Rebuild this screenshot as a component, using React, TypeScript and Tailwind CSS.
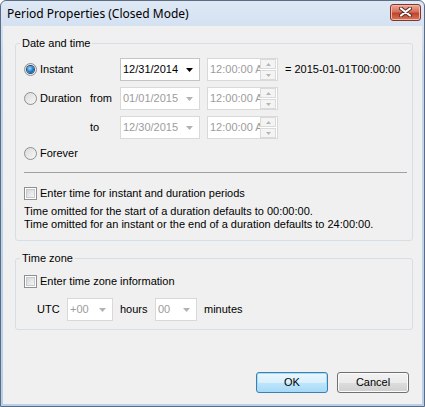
import React from "react";

const body = "font-['Liberation_Sans',Tahoma,sans-serif] text-[11px] leading-[13px]";

function Radio({ checked }: { checked?: boolean }) {
    return (
        <span className="flex h-[13px] w-[13px] shrink-0 items-center justify-center rounded-full border border-[#8e8f8f] bg-[linear-gradient(135deg,#d9dadb,#f8f8f8)]">
            {checked && (
                <span className="h-[7px] w-[7px] rounded-full bg-[radial-gradient(circle_at_40%_35%,#a4dcff,#2f86cc_45%,#0d3e72)] shadow-[0_0_0_1px_#1b4d7c]" />
            )}
        </span>
    );
}

function Checkbox() {
    return (
        <span className="flex h-[13px] w-[13px] shrink-0 items-center justify-center border border-[#8e8f8f] bg-white">
            <span className="h-[9px] w-[9px] border border-[#c6c9ce] bg-[linear-gradient(135deg,#d4d7db,#f4f4f4)]" />
        </span>
    );
}

function Arrow({ color }: { color: string }) {
    return (
        <svg width="7" height="4" viewBox="0 0 7 4" className="shrink-0">
            <path d="M0 0h7L3.5 4z" fill={color} />
        </svg>
    );
}

function Combo({ value, disabled, width }: { value: string; disabled?: boolean; width: string }) {
    return (
        <div
            className={`flex h-[23px] ${width} shrink-0 items-center justify-between border bg-white pl-[2px] pr-[6px] ${
                disabled ? "border-[#d9d9d9] text-[#9c9c9c]" : "border-[#c4c4c4] text-black"
            }`}
        >
            <span>{value}</span>
            <Arrow color={disabled ? "#b3b3b3" : "#000000"} />
        </div>
    );
}

// the time box is narrower than its text, as in the dialog: "12:00:00 A" shows, the rest is cut
function Spinner() {
    return (
        <div className="flex h-[23px] w-[71px] shrink-0 items-center border border-[#d9d9d9] bg-white pl-[2px] pr-[1px]">
            <span className="w-[51px] overflow-hidden whitespace-nowrap text-[#9c9c9c]">12:00:00 AM</span>
            <div className="ml-auto flex h-[21px] w-[16px] flex-col gap-px">
                {[0, 1].map((i) => (
                    <div key={i} className="flex flex-1 items-center justify-center border border-[#dadada] bg-[#f4f4f4]">
                        <svg width="5" height="3" viewBox="0 0 5 3">
                            <path d={i === 0 ? "M0 3h5L2.5 0z" : "M0 0h5L2.5 3z"} fill="#b5b5b5" />
                        </svg>
                    </div>
                ))}
            </div>
        </div>
    );
}

function Button({ label, primary }: { label: string; primary?: boolean }) {
    return (
        <button
            type="button"
            className={`h-[21px] w-[72px] rounded-[3px] border text-black ${
                primary
                    ? "border-[#3c7fb1] bg-[linear-gradient(#eaf6fd_0%,#d9f0fc_50%,#bee6fd_51%,#a7d9f5_100%)] shadow-[inset_0_0_0_1px_#a6dcf7]"
                    : "border-[#707070] bg-[linear-gradient(#f2f2f2_0%,#ebebeb_50%,#dddddd_51%,#cfcfcf_100%)] shadow-[inset_0_0_0_1px_#fbfbfb]"
            }`}
        >
            {label}
        </button>
    );
}

export default function App() {
    return (
        <div className={`flex h-[407px] w-[425px] flex-col rounded-t-[6px] border border-[#5b6d82] bg-[linear-gradient(#dfe9f5,#c4d6ec_60px,#b9cfe8)] ${body}`}>
            {/* title bar */}
            <div className="flex h-[25px] shrink-0 items-center justify-between pl-[6px] pr-[3px]">
                <span className="font-['Noto_Sans',sans-serif] text-[12px] leading-none text-black">
                    Period Properties (Closed Mode)
                </span>
                <div className="mt-[-3px] flex h-[17px] w-[31px] items-center justify-center rounded-[3px] border border-[#8a3226] bg-[linear-gradient(#e9a99b,#d6705c_45%,#c0432b_55%,#d5785c)] shadow-[inset_0_0_0_1px_#f0b8a8]">
                    <svg width="13" height="10" viewBox="0 0 13 10">
                        <path d="M2 1.5l9 7M11 1.5l-9 7" stroke="#5a2a22" strokeWidth="4" strokeLinecap="round" />
                        <path d="M2 1.5l9 7M11 1.5l-9 7" stroke="#ffffff" strokeWidth="2.2" strokeLinecap="round" />
                    </svg>
                </div>
            </div>

            {/* client area */}
            <div className="mx-[2px] mb-[2px] flex flex-1 flex-col bg-[#f0f0f0] pl-[12px] pr-[9px] pt-[10px]">
                <fieldset className="rounded-[3px] border border-[#d5dfe5] pb-[9px] pl-[4px] pr-[4px] pt-[8px]">
                    <legend className="px-[2px] leading-[14px] text-black">Date and time</legend>

                    <div className="flex flex-col pl-[4px]">
                        <div className="flex h-[23px] items-center">
                            <div className="flex w-[96px] items-center gap-[3px]">
                                <Radio checked />
                                <span>Instant</span>
                            </div>
                            <Combo value="12/31/2014" width="w-[80px]" />
                            <div className="ml-[7px]">
                                <Spinner />
                            </div>
                            <span className="ml-[7px]">= 2015-01-01T00:00:00</span>
                        </div>

                        <div className="mt-[6px] flex h-[23px] items-center">
                            <div className="flex w-[66px] items-center gap-[3px]">
                                <Radio />
                                <span>Duration</span>
                            </div>
                            <span className="w-[30px]">from</span>
                            <Combo value="01/01/2015" disabled width="w-[80px]" />
                            <div className="ml-[7px]">
                                <Spinner />
                            </div>
                        </div>

                        <div className="mt-[6px] flex h-[23px] items-center">
                            <span className="ml-[66px] w-[30px]">to</span>
                            <Combo value="12/30/2015" disabled width="w-[80px]" />
                            <div className="ml-[7px]">
                                <Spinner />
                            </div>
                        </div>

                        <div className="mt-[3px] flex h-[23px] items-center gap-[3px]">
                            <Radio />
                            <span>Forever</span>
                        </div>

                        <div className="mr-[1px] mt-[7px] h-[2px] border-t border-[#a0a0a0] border-b-white" />

                        <div className="mt-[11px] flex h-[16px] items-center gap-[3px]">
                            <Checkbox />
                            <span>Enter time for instant and duration periods</span>
                        </div>
                        <p className="mt-[4px]">Time omitted for the start of a duration defaults to 00:00:00.</p>
                        <p>Time omitted for an instant or the end of a duration defaults to 24:00:00.</p>
                    </div>
                </fieldset>

                <fieldset className="mt-[10px] rounded-[3px] border border-[#d5dfe5] pb-[8px] pl-[4px] pr-[4px] pt-[8px]">
                    <legend className="px-[2px] leading-[14px] text-black">Time zone</legend>
                    <div className="flex flex-col pl-[4px]">
                        <div className="flex h-[16px] items-center gap-[3px]">
                            <Checkbox />
                            <span>Enter time zone information</span>
                        </div>
                        <div className="mt-[9px] flex h-[23px] items-center pl-[13px]">
                            <span className="w-[30px]">UTC</span>
                            <Combo value="+00" disabled width="w-[46px]" />
                            <span className="ml-[7px] w-[35px]">hours</span>
                            <Combo value="00" disabled width="w-[42px]" />
                            <span className="ml-[7px]">minutes</span>
                        </div>
                    </div>
                </fieldset>

                <div className="mb-[11px] mt-auto flex justify-end gap-[9px] pr-[4px]">
                    <Button label="OK" primary />
                    <Button label="Cancel" />
                </div>
            </div>
        </div>
    );
}
